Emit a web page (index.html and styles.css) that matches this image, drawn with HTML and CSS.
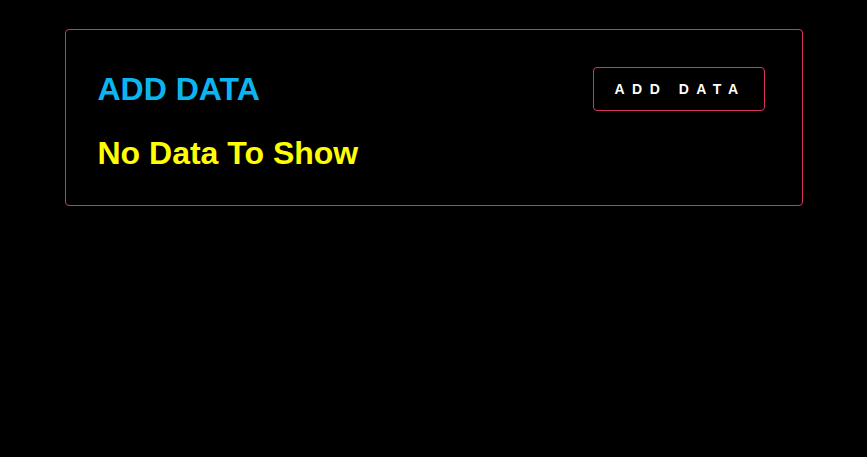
FILE: index.html
```html
<!DOCTYPE html>
<html>
<head>
<meta charset="utf-8">
<link rel="stylesheet" href="styles.css">
</head>
<body>
<div class="card">
  <div class="card-header">
    <h1 class="title">ADD DATA</h1>
    <button class="add-btn">ADD DATA</button>
  </div>
  <p class="empty">No Data To Show</p>
</div>
</body>
</html>
```
FILE: styles.css
```css
html, body {
  margin: 0;
  padding: 0;
  background: #000;
  font-family: "Liberation Sans", Arial, sans-serif;
}
body {
  padding-top: 29px;
}
.card {
  width: 738px;
  margin: 0 auto;
  box-sizing: border-box;
  border: 1px solid #d6326e;
  border-radius: 4px;
  padding: 37px 37px 33px 32px;
}
.card-header {
  display: flex;
  align-items: center;
  justify-content: space-between;
}
.title {
  margin: 0;
  font-size: 32px;
  font-weight: bold;
  color: #0bb5f0;
  line-height: 37px;
}
.add-btn {
  background: #000;
  color: #fff;
  border: 1px solid #d6326e;
  border-radius: 4px;
  font-family: "Liberation Sans", Arial, sans-serif;
  font-weight: bold;
  font-size: 14px;
  letter-spacing: 7.5px;
  padding: 13px 18px 13px 20px;
  line-height: 16px;
}
.empty {
  margin: 24px 0 0;
  font-size: 32px;
  font-weight: bold;
  color: #ffff00;
  line-height: 37px;
}
```
